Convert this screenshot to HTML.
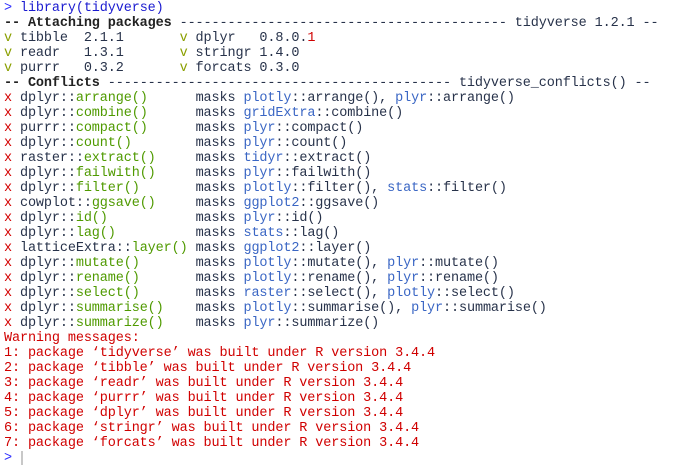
<!DOCTYPE html>
<html><head><meta charset="utf-8"><style>
html,body{margin:0;padding:0;background:#fff;width:687px;height:472px;overflow:hidden}
pre{margin:0;position:absolute;left:4px;top:1px;font-family:"Liberation Mono",monospace;font-size:13.5px;line-height:15px;color:#27324a;letter-spacing:-0.12px}
.p{color:#2a2aff}.i{color:#1a1ad0}
.b{font-weight:bold;color:#222}
.v{color:#8a9f00}.x{color:#d40000}.g{color:#4f9a00}.u{color:#3a66c4}.r{color:#d00000}
.cur{position:absolute;left:21px;top:451px;width:2px;height:14px;background:#c8c8c8}
</style></head><body><pre><span class="p">&gt; </span><span class="i">library(tidyverse)</span>
<span class="b">-- Attaching packages</span> ----------------------------------------- tidyverse 1.2.1 --
<span class="v">v</span> tibble  2.1.1       <span class="v">v</span> dplyr   0.8.0.<span class="r">1</span>
<span class="v">v</span> readr   1.3.1       <span class="v">v</span> stringr 1.4.0
<span class="v">v</span> purrr   0.3.2       <span class="v">v</span> forcats 0.3.0
<span class="b">-- Conflicts</span> ------------------------------------------- tidyverse_conflicts() --
<span class="x">x</span> dplyr::<span class="g">arrange()</span>      masks <span class="u">plotly</span>::arrange(), <span class="u">plyr</span>::arrange()
<span class="x">x</span> dplyr::<span class="g">combine()</span>      masks <span class="u">gridExtra</span>::combine()
<span class="x">x</span> purrr::<span class="g">compact()</span>      masks <span class="u">plyr</span>::compact()
<span class="x">x</span> dplyr::<span class="g">count()</span>        masks <span class="u">plyr</span>::count()
<span class="x">x</span> raster::<span class="g">extract()</span>     masks <span class="u">tidyr</span>::extract()
<span class="x">x</span> dplyr::<span class="g">failwith()</span>     masks <span class="u">plyr</span>::failwith()
<span class="x">x</span> dplyr::<span class="g">filter()</span>       masks <span class="u">plotly</span>::filter(), <span class="u">stats</span>::filter()
<span class="x">x</span> cowplot::<span class="g">ggsave()</span>     masks <span class="u">ggplot2</span>::ggsave()
<span class="x">x</span> dplyr::<span class="g">id()</span>           masks <span class="u">plyr</span>::id()
<span class="x">x</span> dplyr::<span class="g">lag()</span>          masks <span class="u">stats</span>::lag()
<span class="x">x</span> latticeExtra::<span class="g">layer()</span> masks <span class="u">ggplot2</span>::layer()
<span class="x">x</span> dplyr::<span class="g">mutate()</span>       masks <span class="u">plotly</span>::mutate(), <span class="u">plyr</span>::mutate()
<span class="x">x</span> dplyr::<span class="g">rename()</span>       masks <span class="u">plotly</span>::rename(), <span class="u">plyr</span>::rename()
<span class="x">x</span> dplyr::<span class="g">select()</span>       masks <span class="u">raster</span>::select(), <span class="u">plotly</span>::select()
<span class="x">x</span> dplyr::<span class="g">summarise()</span>    masks <span class="u">plotly</span>::summarise(), <span class="u">plyr</span>::summarise()
<span class="x">x</span> dplyr::<span class="g">summarize()</span>    masks <span class="u">plyr</span>::summarize()
<span class="r">Warning messages:
1: package ‘tidyverse’ was built under R version 3.4.4
2: package ‘tibble’ was built under R version 3.4.4
3: package ‘readr’ was built under R version 3.4.4
4: package ‘purrr’ was built under R version 3.4.4
5: package ‘dplyr’ was built under R version 3.4.4
6: package ‘stringr’ was built under R version 3.4.4
7: package ‘forcats’ was built under R version 3.4.4</span>
<span class="p">&gt;</span></pre><div class="cur"></div></body></html>
